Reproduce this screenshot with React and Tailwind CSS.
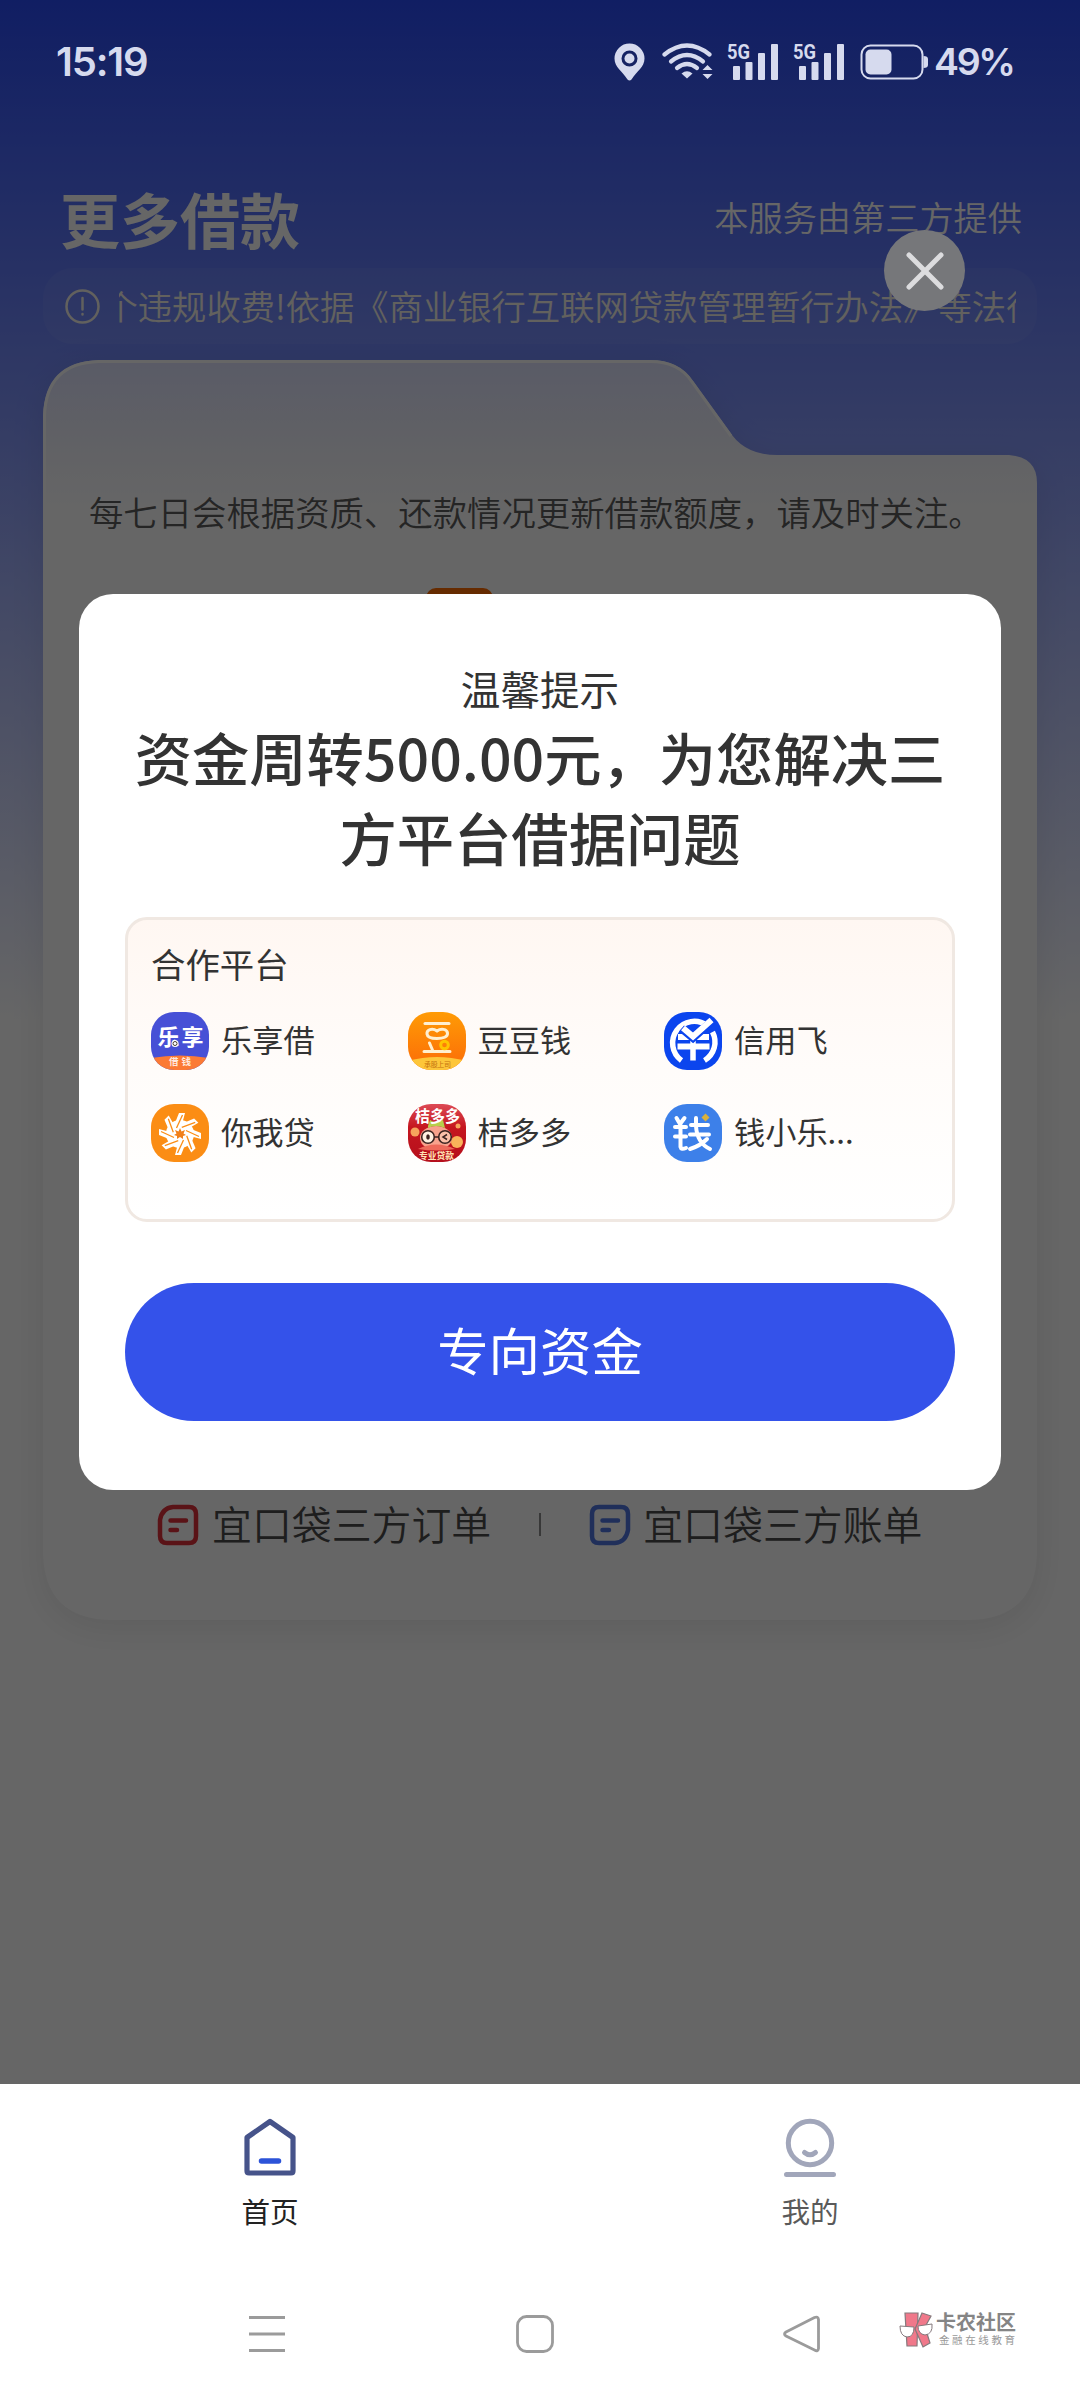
import React from 'react';

const LexiangIcon = () => (
  <svg className="w-[58px] h-[58px] rounded-[23px]" viewBox="0 0 58 58">
    <rect width="58" height="58" fill="#4650d6" />
    <path d="M0 46Q29 41 58 46V58H0Z" fill="#fb7a35" />
    <text x="6.5" y="33" fontSize="22" fontWeight="bold" fill="#fff" textLength="46">乐享</text>
    <circle cx="24" cy="31.500" r="3.500" fill="#fff" />
    <circle cx="24" cy="31.500" r="2" fill="none" stroke="#4a3c30" strokeWidth="1" />
    <text x="18" y="53" fontSize="9.500" fontWeight="bold" fill="#ffe9dc" textLength="22">借钱</text>
  </svg>
);

const DoudouIcon = () => (
  <svg className="w-[58px] h-[58px] rounded-[23px]" viewBox="0 0 58 58">
    <defs>
      <linearGradient id="doudou" x1="0" y1="0" x2="0" y2="1">
        <stop offset="0" stopColor="#ff9b05" />
        <stop offset="1" stopColor="#fb6b08" />
      </linearGradient>
    </defs>
    <rect width="58" height="58" fill="url(#doudou)" />
    <path d="M0 49Q29 41 58 49V58H0Z" fill="#fdc63a" />
    <g fill="none" stroke="#ffefd0" strokeWidth="3" strokeLinecap="round">
      <path d="M17 11.500H41" />
      <path d="M29 19C24 15.500 18.500 18 19 22C19.500 26 24 26.500 29 26.500C35 26.500 40 25 39.500 21C39 17 33 16 29 19Z" />
      <path d="M21.500 31L24.500 38M16 39.500H42" />
    </g>
    <circle cx="36.500" cy="33" r="3.800" fill="none" stroke="#ffc400" strokeWidth="3" />
    <text x="16" y="54.500" fontSize="7" fill="#c7740f" textLength="27">承股上司</text>
  </svg>
);

const XinyongfeiIcon = () => (
  <svg className="w-[58px] h-[58px] rounded-[23px]" viewBox="0 0 58 58">
    <rect width="58" height="58" fill="#0b45ee" />
    <path d="M17.500 48.500A21.500 21.500 0 1 1 43 13.500M48.500 20A21.500 21.500 0 0 1 40.500 48.500" fill="none" stroke="#fff" strokeWidth="5.500" />
    <path d="M14 25H45M13.500 34.500H45.500" stroke="#fff" strokeWidth="6" />
    <path d="M29 26V48.500" stroke="#fff" strokeWidth="5.500" />
    <path d="M17.500 16.500L29 26L48 9" fill="none" stroke="#0b45ee" strokeWidth="8" />
    <path d="M19 16L29 24.500L47.500 8" fill="none" stroke="#fff" strokeWidth="6" />
  </svg>
);

const NiwodaiIcon = () => (
  <svg className="w-[58px] h-[58px] rounded-[23px]" viewBox="0 0 58 58">
    <rect width="58" height="58" fill="#fb8d14" />
    <circle cx="29" cy="30" r="14" fill="#fff" />
    {[0, 45, 90, 135, 180, 225, 270, 315].map((angle) => (
      <g key={angle} transform={`rotate(${angle} 29 30)`}>
        <path d="M22 24L28 9H34L30 24Z" fill="#fff" />
        <path d="M31.500 11L25.500 24" stroke="#fb8d14" strokeWidth="1.300" />
      </g>
    ))}
    <path d="M29 24L30.500 27.500L34 26L32.500 29.500L35 31L32 32L32 35L29 33L26 35L26 32L23 31L25.500 29.500L24 26L27.500 27.500Z" fill="#f1801b" />
  </svg>
);

const JieduoduoIcon = () => (
  <svg className="w-[58px] h-[58px] rounded-[23px]" viewBox="0 0 58 58">
    <defs>
      <linearGradient id="jieduoduo" x1="0" y1="0" x2="0" y2="1">
        <stop offset="0" stopColor="#dd4a55" />
        <stop offset="0.4" stopColor="#c5161f" />
        <stop offset="1" stopColor="#b50f1c" />
      </linearGradient>
    </defs>
    <rect width="58" height="58" fill="url(#jieduoduo)" />
    <circle cx="7" cy="28" r="4.500" fill="#f6a35c" />
    <circle cx="49" cy="38" r="6" fill="#f9b35a" />
    <circle cx="50" cy="22" r="2.500" fill="#f6a35c" />
    <ellipse cx="28" cy="34" rx="16" ry="12" fill="#f8a28c" />
    <path d="M10 45Q28 36 47 45Q28 48 10 45Z" fill="#ee6a5a" />
    <path d="M20 22L22 16L28 19L35 16L37 24Q28 20 20 24Z" fill="#b7cf4b" />
    <circle cx="20" cy="33" r="6.300" fill="#fff0e0" stroke="#3b2320" strokeWidth="1.600" />
    <circle cx="37" cy="33" r="6.300" fill="#fbc0a8" stroke="#3b2320" strokeWidth="1.600" />
    <path d="M26 33H31M39 30.500L35 33L39 35.500" fill="none" stroke="#3b2320" strokeWidth="1.500" />
    <ellipse cx="20" cy="33" rx="1.800" ry="2.800" fill="#3b2320" />
    <text x="7" y="18" fontSize="15.500" fontWeight="bold" fill="#fff" textLength="45" lengthAdjust="spacingAndGlyphs">桔多多</text>
    <text x="11" y="54.500" fontSize="8.800" fontWeight="bold" fill="#ffe3b5" textLength="35">专业贷款</text>
  </svg>
);

const QianxiaoleIcon = () => (
  <svg className="w-[58px] h-[58px] rounded-[23px]" viewBox="0 0 58 58">
    <rect width="58" height="58" fill="#3d80e9" />
    <g fill="none" stroke="#fff" strokeWidth="4" strokeLinecap="round" strokeLinejoin="round">
      <path d="M12.500 14L16 20L20.500 14M11 23H22M11 32.500H22M16.500 21V43Q17 46 22 44" />
      <path d="M27 21H44M26 30.500H45M32 14V22Q33 39 46 45M43 35Q36 42 26 45" />
    </g>
    <path d="M41.500 9.500L45.500 13.500L41.500 17.500L37.500 13.500Z" fill="#d9b13c" />
  </svg>
);

const platforms = [
  { name: '乐享借', Icon: LexiangIcon },
  { name: '豆豆钱', Icon: DoudouIcon },
  { name: '信用飞', Icon: XinyongfeiIcon },
  { name: '你我贷', Icon: NiwodaiIcon },
  { name: '桔多多', Icon: JieduoduoIcon },
  { name: '钱小乐...', Icon: QianxiaoleIcon },
];

const Signal = () => (
  <svg className="w-[52px] h-[38px] overflow-visible" viewBox="0 0 52 38" fill="currentColor">
    <text x="0" y="16" fontFamily="Roboto" fontSize="20" fontWeight="bold" textLength="23" lengthAdjust="spacingAndGlyphs">5G</text>
    <rect x="6" y="23" width="7" height="14" rx="1" />
    <rect x="18.500" y="19" width="7" height="18" rx="1" />
    <rect x="31" y="10" width="7" height="27" rx="1" />
    <rect x="44" y="1" width="7" height="36" rx="1" />
  </svg>
);

const StatusBar = () => (
  <div className="flex items-center justify-between h-[124px] pl-[56px] pr-[66px] text-[#d6daee]">
    <span className="font-[Inter] text-[40px] font-semibold tracking-[-1.2px]">15:19</span>
    <div className="flex items-center">
      <svg className="w-[31px] h-[38px] mr-[17px]" viewBox="0 0 31 38" fill="currentColor">
        <path fillRule="evenodd" d="M15.500 0.500A15 15 0 0 0 0.500 15.500C0.500 24 8 28 13.500 36.500Q15.500 38.500 17.500 36.500C23 28 30.500 24 30.500 15.500A15 15 0 0 0 15.500 0.500ZM15.500 7.500A8 8 0 1 1 15.500 23.500A8 8 0 1 1 15.500 7.500Z" />
        <circle cx="15.500" cy="15.500" r="5" />
      </svg>
      <svg className="w-[51px] h-[38px] mr-[14px]" viewBox="0 0 51 38" fill="none" stroke="currentColor" strokeWidth="4.200" strokeLinecap="round">
        <path d="M2.500 11.500Q25 -6.500 47.500 11.500" />
        <path d="M9 18.500Q25 5.500 41 18.500" />
        <path d="M15 25Q25 17 35 25" />
        <path d="M19.500 30.500Q25 26 30.500 30.500L25 35.500Z" fill="currentColor" stroke="none" />
        <path d="M40.500 27L45.500 22L50.500 27ZM40.500 31L45.500 36L50.500 31Z" fill="currentColor" stroke="none" />
      </svg>
      <div className="mr-[14px]"><Signal /></div>
      <div className="mr-[15px]"><Signal /></div>
      <svg className="w-[68px] h-[36px] mr-[6px]" viewBox="0 0 68 36">
        <rect x="1.500" y="1.500" width="61" height="33" rx="9" fill="none" stroke="currentColor" strokeWidth="2" />
        <rect x="5.500" y="5.500" width="26" height="25" rx="5" fill="currentColor" />
        <path d="M63.500 12Q68 12 68 15V21Q68 24 63.500 24Z" fill="currentColor" />
      </svg>
      <span className="w-[80px] font-[Inter] text-[37.5px] font-semibold leading-[46px] tracking-[-2.3px] whitespace-nowrap">49%</span>
    </div>
  </div>
);

const OrderIcon = ({ className, flip }) => (
  <svg className={className} viewBox="0 0 42 42" fill="none" stroke="currentColor" strokeWidth="4.500" strokeLinecap="round">
    {flip ? (
      <path d="M10 3H32Q39 3 39 10V26Q37 38 26 39H10Q3 39 3 32V10Q3 3 10 3Z" />
    ) : (
      <path d="M16 3H32Q39 3 39 10V32Q39 39 32 39H10Q3 39 3 32V16Q5 4 16 3Z" />
    )}
    <path d="M13.500 16.500H29M13.500 26H20" />
  </svg>
);

const PageContent = () => (
  <div className="h-[2084px] pt-[172px] bg-[linear-gradient(180deg,#2a4cf8_0px,#ffffff_1020px)]">
    <div className="flex items-center justify-between h-[92px] pl-[60px] pr-[58px] text-white">
      <h1 className="text-[60px] font-bold leading-[90px]">更多借款</h1>
      <span className="-mt-[3px] text-[34.2px] font-[350]">本服务由第三方提供</span>
    </div>
    <div className="flex items-center h-[76px] mx-[43px] mt-[4px] mb-[16px] pl-[22px] pr-[21px] rounded-[30px] bg-white/5 text-[#f4f2ea]">
      <svg className="w-[36px] h-[36px] shrink-0" viewBox="0 0 36 36" fill="none" stroke="currentColor" strokeWidth="2.500" strokeLinecap="round">
        <circle cx="17.500" cy="18.500" r="16" />
        <path d="M17.500 10V21.500M17.500 26V26.500" />
      </svg>
      <div className="flex-1 ml-[18px] -mt-[3px] overflow-hidden">
        <p className="ml-[-15.5px] text-[34.3px] font-[350] leading-[50px] whitespace-nowrap">
          个违规收费!依据《商业银行互联网贷款管理暂行办法》等法律
        </p>
      </div>
    </div>
    <div className="relative w-[994px] h-[1260px] mx-auto">
      {/* Folder-shaped card */}
      <svg className="absolute inset-0 w-[994px] h-[1260px] overflow-visible drop-shadow-[0_8px_16px_rgba(0,0,0,0.08)]" viewBox="0 0 994 1260">
        <defs>
          <linearGradient id="card" gradientUnits="userSpaceOnUse" x1="0" y1="0" x2="0" y2="150">
            <stop offset="0" stopColor="#dfe3ff" />
            <stop offset="0.6" stopColor="#f3f4fc" />
            <stop offset="1" stopColor="#ffffff" />
          </linearGradient>
        </defs>
        <path
          d="M56 0H607Q636 0 650 21L689 75Q704 95 734 95H966Q994 97 994 123V1190Q994 1260 924 1260H70Q0 1260 0 1190V56Q2 2 56 0Z"
          fill="url(#card)"
        />
        <path d="M1.500 180V56Q3 3 56 1.500H607Q636 1.500 649 22L688 76" fill="none" stroke="#fff" strokeWidth="3" />
      </svg>
      <div className="relative flex flex-col h-full">
        <p className="mt-[126px] ml-[46px] text-[34.38px] font-[350] leading-[50px] text-[#5c5c5c] whitespace-nowrap">
          每七日会根据资质、还款情况更新借款额度，请及时关注。
        </p>
        <div className="w-[67px] h-[40px] mt-[52px] ml-[383px] rounded-[10px] bg-[#ff6b00]" />
        <div className="flex items-center mt-auto mb-[67px] ml-[114px] text-[39.9px] font-[350] leading-[60px] text-[#4c4c4c]">
          <OrderIcon className="w-[42px] h-[42px] mr-[13px] text-[#e0313a]" />
          <span className="-mt-[3px]">宜口袋三方订单</span>
          <span className="w-[2px] h-[23px] mx-[48px] bg-[#8d8d8d]" />
          <OrderIcon className="w-[42px] h-[42px] mr-[12px] text-[#5177e2]" flip />
          <span className="-mt-[3px]">宜口袋三方账单</span>
        </div>
      </div>
    </div>
  </div>
);

const Modal = () => (
  <div className="flex flex-col w-[922px] h-[896px] mx-auto mt-[283px] px-[46px] pt-[65px] rounded-[34px] bg-white text-[#333333]">
    <p className="text-center text-[39.600px] leading-[58px]">温馨提示</p>
    <h2 className="text-center text-[57.3px] leading-[80px] font-medium">
      资金周转500.00元，为您解决三
      <br />
      方平台借据问题
    </h2>
    <div className="h-[305px] mt-[40px] pl-[23px] pt-[18px] border-[3px] border-[#f0e8e2] rounded-[22px] bg-linear-to-b from-[#fff7f2] via-[#fffcfa] to-white">
      <p className="text-[34.4px] leading-[50px]">合作平台</p>
      <div className="grid grid-cols-[256.5px_256.5px_256.5px] gap-y-[34px] mt-[24px]">
        {platforms.map(({ name, Icon }) => (
          <div key={name} className="flex items-center h-[58px]">
            <Icon />
            <span className="ml-[12px] -mt-[4px] text-[31.2px] leading-[44px]">{name}</span>
          </div>
        ))}
      </div>
    </div>
    <button className="h-[138px] mt-[61px] pb-[6px] rounded-full bg-[#3452ea] text-[51.4px] text-white">
      专向资金
    </button>
  </div>
);

const TabBar = () => (
  <div className="flex h-[180px] pt-[32px] text-[28.600px] leading-[40px]">
    <div className="flex flex-1 flex-col items-center text-[#222222]">
      <svg className="w-[56px] h-[62px] mb-[13px]" viewBox="0 0 56 62" fill="none" strokeLinecap="round" strokeLinejoin="round">
        <path d="M28 5.500L51 21.500V55Q51 57 49 57H7Q5 57 5 55V21.500Z" stroke="#46538a" strokeWidth="5.200" />
        <path d="M19.500 45H36.500" stroke="#2c53d8" strokeWidth="5.500" />
      </svg>
      <span>首页</span>
    </div>
    <div className="flex flex-1 flex-col items-center text-[#5a5a5a]">
      <svg className="w-[56px] h-[62px] mb-[13px]" viewBox="0 0 56 62" fill="none" stroke="#a1a6ba" strokeWidth="5" strokeLinecap="round">
        <circle cx="28" cy="27" r="21.700" />
        <path d="M22.500 36.500Q28 41 33.500 36.500M4.500 58.500H51.500" />
      </svg>
      <span>我的</span>
    </div>
  </div>
);

const SystemNav = () => (
  <div className="flex items-center h-[136px] pt-[3px] pl-[248px]">
    <svg className="w-[38px] h-[38px] mr-[230px]" viewBox="0 0 38 38" stroke="#9b9b9b" strokeWidth="3">
      <path d="M1 2.500H37M1 19H37M1 35.500H37" />
    </svg>
    <svg className="w-[38px] h-[38px] mr-[229px]" viewBox="0 0 38 38" fill="none" stroke="#9b9b9b" strokeWidth="2.800">
      <rect x="1.500" y="1.500" width="35" height="35" rx="9" />
    </svg>
    <svg className="w-[38px] h-[38px] mr-[78px]" viewBox="0 0 38 38" fill="none" stroke="#9b9b9b" strokeWidth="2.800" strokeLinejoin="round">
      <path d="M35.500 4.500V33.500Q35 37 31.500 35L3 21Q0 19 3 17L31.500 2.500Q35 1 35.500 4.500Z" />
    </svg>
    <svg className="w-[35px] h-[36px] mr-[2px] -mt-[8px]" viewBox="0 0 35 36">
      <g fill="#f0788a" stroke="#85797d" strokeWidth="1.200">
        <path d="M6 1H19L18 34H8Z" />
        <path d="M23 1L32 4L26 15L31 31L24 35L16 17Z" />
      </g>
      <path d="M1 14L15 15Q15 25 8 25Q1 24 1 14Z" fill="#fff" stroke="#85797d" />
      <path d="M19 14L33 12Q34 22 26 23Q19 22 19 14Z" fill="#fff" stroke="#85797d" />
    </svg>
    <div className="flex flex-col -mt-[10px]">
      <span className="text-[20px] font-bold leading-[22px] text-[#858585]">卡农社区</span>
      <span className="ml-[3px] text-[10.5px] leading-[13px] tracking-[2.6px] text-[#999999]">金融在线教育</span>
    </div>
  </div>
);

export default function App() {
  return (
    <div className="relative w-[1080px] h-[2400px] overflow-hidden bg-white font-['Noto_Sans_CJK_SC',sans-serif]">
      <PageContent />
      <div className="absolute inset-x-0 top-0 h-[2084px] bg-black/60">
        <StatusBar />
        <button className="flex items-center justify-center w-[81px] h-[81px] mt-[106px] ml-[884px] rounded-full bg-[#76777a]">
          <svg className="w-[38px] h-[38px]" viewBox="0 0 38 38" stroke="#dcdcde" strokeWidth="5" strokeLinecap="round">
            <path d="M3 3L35 35M35 3L3 35" />
          </svg>
        </button>
        <Modal />
      </div>
      <TabBar />
      <SystemNav />
    </div>
  );
}
